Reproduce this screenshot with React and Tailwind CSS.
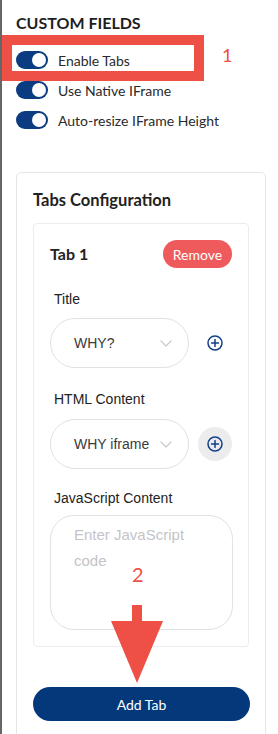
import React from 'react';

const Toggle = ({label}) => (
    <div className="flex items-center h-[30px]">
        <div className="w-[32px] h-[18px] rounded-full bg-[#0b3b80] flex items-center justify-end pr-[2px]">
            <div className="w-[14px] h-[14px] rounded-full bg-white"></div>
        </div>
        <span className="ml-[10px] text-[14px] text-[#2a2a2a] font-['Lato',sans-serif]">{label}</span>
    </div>
);

const Chevron = () => (
    <svg width="12" height="7" viewBox="0 0 12 7" fill="none">
        <path d="M1 1l5 5 5-5" stroke="#c9c9cf" strokeWidth="1.2" strokeLinecap="round" strokeLinejoin="round" />
    </svg>
);

const PlusCircle = () => (
    <svg width="16" height="16" viewBox="0 0 16 16" fill="none">
        <circle cx="8" cy="8" r="7" stroke="#123f86" strokeWidth="1.5" />
        <path d="M8 4.5v7M4.5 8h7" stroke="#123f86" strokeWidth="1.5" strokeLinecap="round" />
    </svg>
);

const SelectRow = ({value, active}) => (
    <div className="flex items-center">
        <div className="w-[140px] h-[50px] rounded-full border border-[#e1e1e6] flex items-center justify-between pl-[23px] pr-[16px]">
            <span className="text-[14px] text-[#3a3a3a]">{value}</span>
            <Chevron />
        </div>
        <div className={`ml-[9px] w-[34px] h-[34px] rounded-full flex items-center justify-center ${active ? "bg-[#ececee]" : ""}`}>
            <PlusCircle />
        </div>
    </div>
);

export default function App() {
    return (
        <div className="relative w-[278px] h-[734px] overflow-hidden bg-white border-l-2 border-[#666] font-['Liberation_Sans',sans-serif]">
            <div className="pl-[14px] pt-[13px]">
                <div className="text-[16px] leading-[20px] font-bold text-[#1e1e1e] font-['Lato',sans-serif]">CUSTOM FIELDS</div>
                <div className="mt-[12px]">
                    <Toggle label="Enable Tabs" />
                    <Toggle label="Use Native IFrame" />
                    <Toggle label="Auto-resize IFrame Height" />
                </div>

                <div className="mt-[37px] w-[250px] h-[600px] border border-[#e6e6e8] rounded-[5px] px-[16px] pt-[17px]">
                    <div className="text-[16.5px] leading-[20px] font-bold text-[#222] font-['Lato',sans-serif]">Tabs Configuration</div>
                    <div className="mt-[13px] w-[216px] border border-[#ececee] rounded-[4px] px-[16px] pt-[16px] pb-[16px]">
                        <div className="flex items-center justify-between h-[28px]">
                            <span className="text-[16px] font-bold text-[#222] font-['Lato',sans-serif]">Tab 1</span>
                            <button className="w-[69px] h-[28px] rounded-full bg-[#ef5a5d] text-white text-[14px] font-['Lato',sans-serif]">Remove</button>
                        </div>

                        <div className="mt-[21px] pl-[4px] text-[14px] leading-[20px] text-[#222]">Title</div>
                        <div className="mt-[9px]"><SelectRow value="WHY?" /></div>

                        <div className="mt-[21px] pl-[4px] text-[14px] leading-[20px] text-[#222]">HTML Content</div>
                        <div className="mt-[10px]"><SelectRow value="WHY iframe" active /></div>

                        <div className="mt-[19px] pl-[4px] text-[14px] leading-[20px] text-[#222]">JavaScript Content</div>
                        <div className="mt-[7px] w-[183px] h-[115px] rounded-[24px] border border-[#e1e1e6] pl-[23px] pr-[12px] pt-[6px]">
                            <div className="text-[15px] leading-[26px] text-[#c4c4c8]">Enter JavaScript code</div>
                        </div>
                    </div>
                    <button className="mt-[40px] w-[217px] h-[34px] rounded-full bg-[#03397b] text-white text-[14px] font-['Lato',sans-serif]">Add Tab</button>
                </div>
            </div>

            {/* annotations */}
            <div className="absolute left-[0px] top-[35px] w-[202px] h-[46px] border-[10px] border-[#ef5046]"></div>
            <div className="absolute left-[220px] top-[45px] text-[18px] leading-[20px] text-[#ef5046] font-['Lato',sans-serif]">1</div>
            <div className="absolute left-[130px] top-[566px] text-[20px] leading-[16px] text-[#ef5046] font-['Lato',sans-serif]">2</div>
            <svg className="absolute left-[106px] top-[604px]" width="58" height="80" viewBox="0 0 58 80">
                <path d="M24 1h10v16h21L29 79 3 17h21z" fill="#ef5046" />
            </svg>
        </div>
    );
}
